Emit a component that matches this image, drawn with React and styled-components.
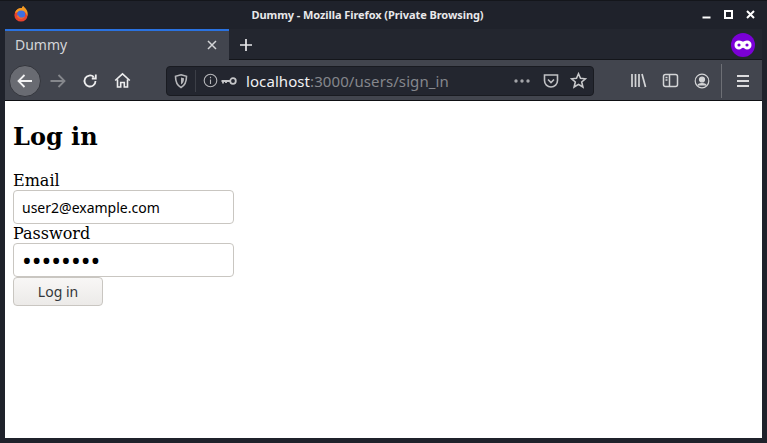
import React from 'react'
import styled, { createGlobalStyle } from 'styled-components'

const GlobalStyle = createGlobalStyle`
  html, body { margin: 0; padding: 0; width: 767px; height: 443px; overflow: hidden; background: #1f222b; }
`

const Window = styled.div`
  width: 767px;
  height: 443px;
  box-sizing: border-box;
  padding: 0 5px 5px;
  background: #1f222b;
  display: flex;
  flex-direction: column;
  font-family: "Noto Sans", sans-serif;
  border-top: 1px solid #14161b;
`

const TitleBar = styled.div`
  height: 28px;
  flex: none;
  box-sizing: border-box;
  display: flex;
  align-items: center;
  justify-content: space-between;
  margin: 0 -5px;
  padding: 0 12px 2px 13px;
`

const Title = styled.div`
  font-size: 11px;
  font-weight: 700;
  letter-spacing: -0.08px;
  color: #e8e8ea;
  margin-left: 4px;
`

const WindowButtons = styled.div`
  display: flex;
  align-items: center;
  gap: 13px;
`

const TabStrip = styled.div`
  height: 31px;
  flex: none;
  display: flex;
  align-items: stretch;
  background: #23262f;
  margin: 0;
`

const Tab = styled.div`
  width: 224px;
  box-sizing: border-box;
  border-top: 2px solid #2a72e0;
  background: #42454e;
  display: flex;
  align-items: center;
  justify-content: space-between;
  padding: 0 11px 2px 10px;
  color: #d4d5d8;
  font-size: 14px;
`

const NewTab = styled.div`
  width: 34px;
  display: flex;
  align-items: center;
  justify-content: center;
  padding-top: 1px;
  border-bottom: 1px solid #14161b;
`

const Spacer = styled.div`
  flex: 1;
  border-bottom: 1px solid #14161b;
`

const PrivateBadge = styled.div`
  width: 24px;
  height: 24px;
  margin: 1px 7px 0 0;
  border-radius: 50%;
  background: #7a00d6;
  display: flex;
  align-items: center;
  justify-content: center;
`

const BadgeSlot = styled.div`
  display: flex;
  align-items: center;
  border-bottom: 1px solid #14161b;
`

const Toolbar = styled.div`
  height: 41px;
  flex: none;
  box-sizing: border-box;
  display: flex;
  align-items: center;
  background: #42454e;
  border-bottom: 1px solid #0e0f13;
  padding: 1px 0 0 4px;
`

const NavButton = styled.div`
  width: ${p => p.$w || 32}px;
  height: 32px;
  flex: none;
  display: flex;
  align-items: center;
  justify-content: center;
  box-sizing: border-box;
  border-radius: 50%;
  ${p => p.$circle && 'background: #696b72; border: 1px solid #33353c;'}
`

const UrlBar = styled.div`
  width: 428px;
  height: 30px;
  flex: none;
  box-sizing: border-box;
  margin-left: 27px;
  background: #23262f;
  border: 1px solid #191b21;
  border-radius: 4px;
  display: flex;
  align-items: center;
  padding-left: 6px;
`

const UrlDivider = styled.div`
  width: 1px;
  height: 22px;
  background: #3c3f47;
  margin: 0 7px 0 6px;
`

const UrlText = styled.div`
  font-size: 15px;
  letter-spacing: 0.08px;
  color: #85878c;
  margin-left: 9px;
  flex: 1;
  white-space: nowrap;
`

const Host = styled.span`
  color: #f0f0f2;
`

const UrlActions = styled.div`
  display: flex;
  align-items: center;
  gap: 11px;
  padding-right: 6px;
`

const MoreDots = styled.svg`
  margin-right: 2px;
`

const KeyIcon = styled.svg`
  margin-left: 3px;
`

const RightTools = styled.div`
  margin-left: 28px;
  display: flex;
  align-items: center;
  height: 100%;
`

const ToolSlot = styled.div`
  width: 32px;
  display: flex;
  justify-content: center;
`

const ToolDivider = styled.div`
  width: 1px;
  height: 34px;
  background: #6d6f75;
  margin: 0 5px 0 3px;
`

const Page = styled.main`
  flex: 1;
  background: #fff;
  padding: 8px;
  font-family: "DejaVu Serif", serif;
  font-size: 16px;
  color: #000;
  overflow: hidden;
`

const Heading = styled.h2`
  font-size: 24px;
  font-weight: 700;
  line-height: 28px;
  margin: 14px 0 20px;
`

const Label = styled.label`
  display: block;
  line-height: 19px;
`

const Input = styled.input`
  display: block;
  box-sizing: border-box;
  width: 221px;
  height: 34px;
  padding: 0 8px;
  border: 1px solid #c9c6c1;
  border-radius: 4px;
  background: #fff;
  color: #000;
  font-family: "Noto Sans", sans-serif;
  font-size: ${p => (p.type === 'password' ? 26 : 14)}px;
  outline: none;
`

const SubmitButton = styled.button`
  display: block;
  box-sizing: border-box;
  width: 90px;
  height: 29px;
  padding: 0;
  border: 1px solid #c9c6c1;
  border-radius: 4px;
  background: linear-gradient(#f8f7f6, #eceae8);
  color: #33363a;
  font-family: "Noto Sans", sans-serif;
  font-size: 14px;
`

const FirefoxLogo = () => (
  <svg width="16" height="16" viewBox="0 0 16 16">
    <circle cx="8" cy="9" r="6.6" fill="#e8432e" />
    <path d="M2 7 C3 3 6 1.5 9 2 C8.6 .8 9.6 .4 10.6 0 C10.6 1.2 12 1.4 13 3 C14.8 5 15 8 14.2 10 C13 6 11 5 8 5 Z" fill="#f59a23" />
    <circle cx="8.2" cy="8.6" r="4" fill="#3d6fe0" />
    <path d="M5 9 C6 12 10 12.4 12 10 C11 14 5 14 3.6 10 Z" fill="#f2662c" />
  </svg>
)

const Icon = ({ children, size = 16, color = '#e2e2e4', fill = 'none', sw = 1.6, vb = 16 }) => (
  <svg width={size} height={size} viewBox={`0 0 ${vb} ${vb}`} fill={fill} stroke={color} strokeWidth={sw}>
    {children}
  </svg>
)

export default function App() {
  return (
    <Window>
      <GlobalStyle />
      <TitleBar>
        <FirefoxLogo />
        <Title>Dummy - Mozilla Firefox (Private Browsing)</Title>
        <WindowButtons>
          <Icon size={9} vb={9} color="#fff" sw={2}><path d="M0.500 7.500H8.500" /></Icon>
          <Icon size={9} vb={9} color="#fff" sw={2}><rect x="1" y="1" width="7" height="7" /></Icon>
          <Icon size={9} vb={9} color="#fff" sw={2}><path d="M1 1L8 8M8 1L1 8" /></Icon>
        </WindowButtons>
      </TitleBar>
      <TabStrip>
        <Tab>
          Dummy
          <Icon size={12} vb={12} color="#d4d5d8" sw={1.5}><path d="M2 2L10 10M10 2L2 10" /></Icon>
        </Tab>
        <NewTab>
          <Icon size={16} color="#e8e8ea" sw={1.7}><path d="M8 2V14M2 8H14" /></Icon>
        </NewTab>
        <Spacer />
        <BadgeSlot>
          <PrivateBadge>
            <svg width="18" height="10" viewBox="0 0 18 10">
              <path fillRule="evenodd" fill="#fff" d="M5 0.5C7 0.5 8 1.6 9 1.6S11 .5 13 .5C15.8 .5 17.5 2.2 17.5 5S15.6 9.5 13 9.5C11 9.5 10 7.8 9 7.8S7 9.5 5 9.5C2.400 9.500 .5 7.800 .5 5S2.200 .5 5 .5ZM5 3.500A1.600 1.500 0 1 0 5 6.500A1.600 1.500 0 1 0 5 3.500ZM13 3.500A1.600 1.500 0 1 0 13 6.500A1.600 1.500 0 1 0 13 3.500Z" />
            </svg>
          </PrivateBadge>
        </BadgeSlot>
      </TabStrip>
      <Toolbar>
        <NavButton $circle>
          <Icon size={18} color="#f2f2f3" sw={1.8} vb={18}><path d="M16 9H2.500M8.500 3L2.500 9L8.500 15" /></Icon>
        </NavButton>
        <NavButton $w={34}>
          <Icon size={18} color="#85878c" sw={1.8} vb={18}><path d="M1.500 9H15.500M9.500 3L15.500 9L9.500 15" /></Icon>
        </NavButton>
        <NavButton $w={30}>
          <Icon size={16} color="#ededee" sw={1.8}><path d="M13.500 8A5.500 5.500 0 1 1 11.800 4M13.800 1.500V5.500H9.800" /></Icon>
        </NavButton>
        <NavButton $w={34}>
          <Icon size={17} color="#ededee" sw={1.6} vb={17}><path d="M1.200 8.500L8.500 1.800L15.800 8.500M3.500 7.500V15H6.700V10.500H10.300V15H13.500V7.500" /></Icon>
        </NavButton>
        <UrlBar>
          <Icon size={16} color="#b5b6b9" sw={1.6}><path d="M8 1.800L13.500 3.300C13.500 9 12 12.500 8 14.500C4 12.500 2.500 9 2.500 3.300Z" /><path d="M8 4.500L11 5.300C11 8.500 10 10.500 8 11.500Z" fill="#b5b6b9" stroke="none" /></Icon>
          <UrlDivider />
          <Icon size={15} vb={15} color="#b5b6b9" sw={1.1}><circle cx="7.500" cy="7.500" r="6.300" /><path d="M7.500 6.500V11M7.500 3.800V5.200" /></Icon>
          <KeyIcon width="16" height="10" viewBox="0 0 16 10" fill="none" stroke="#c5c6c8" strokeWidth="1.800">
            <circle cx="12" cy="5" r="2.800" />
            <path d="M9 5H.5M2 5V7.500M5 5V7" />
          </KeyIcon>
          <UrlText><Host>localhost</Host>:3000/users/sign_in</UrlText>
          <UrlActions>
            <MoreDots width="16" height="4" viewBox="0 0 16 4" fill="#a4a5a9"><circle cx="2" cy="2" r="1.700" /><circle cx="8" cy="2" r="1.700" /><circle cx="14" cy="2" r="1.700" /></MoreDots>
            <Icon size={16} color="#c0c1c4" sw={1.6}><path d="M1.500 2H14.500V7.500A6.500 6.500 0 0 1 1.500 7.500Z" /><path d="M5 6.500L8 9.500L11 6.500" /></Icon>
            <Icon size={17} vb={17} color="#c8c9cb" sw={1.6}><path d="M8.500 1.800L10.500 6.300L15.500 6.800L11.700 10L12.900 15L8.500 12.400L4.100 15L5.300 10L1.500 6.800L6.500 6.300Z" /></Icon>
          </UrlActions>
        </UrlBar>
        <RightTools>
          <ToolSlot>
            <Icon size={17} vb={17} color="#d4d5d7" sw={1.7}><path d="M2 2V15M5.500 2V15M9 2V15M12 2L15.500 15" /></Icon>
          </ToolSlot>
          <ToolSlot>
            <Icon size={17} vb={17} color="#d4d5d7" sw={1.5}><rect x="1.500" y="2.500" width="14" height="12" rx="2" /><path d="M7.500 2.500V14.500M3.500 5.500H5.500M3.500 8H5.500" /></Icon>
          </ToolSlot>
          <ToolSlot>
            <Icon size={16} color="#d4d5d7" sw={1.2}><circle cx="8" cy="8" r="6.800" /><circle cx="8" cy="6.500" r="2.500" fill="#d4d5d7" /><path d="M3.500 12.500C5 9.800 11 9.800 12.500 12.500" fill="#d4d5d7" /></Icon>
          </ToolSlot>
          <ToolDivider />
          <ToolSlot>
            <Icon size={14} vb={14} color="#dcdcde" sw={1.8}><path d="M1 2H13M1 7H13M1 12H13" /></Icon>
          </ToolSlot>
        </RightTools>
      </Toolbar>
      <Page>
        <Heading>Log in</Heading>
        <Label>Email</Label>
        <Input type="text" defaultValue="user2@example.com" />
        <Label>Password</Label>
        <Input type="password" defaultValue="password" />
        <SubmitButton>Log in</SubmitButton>
      </Page>
    </Window>
  )
}
